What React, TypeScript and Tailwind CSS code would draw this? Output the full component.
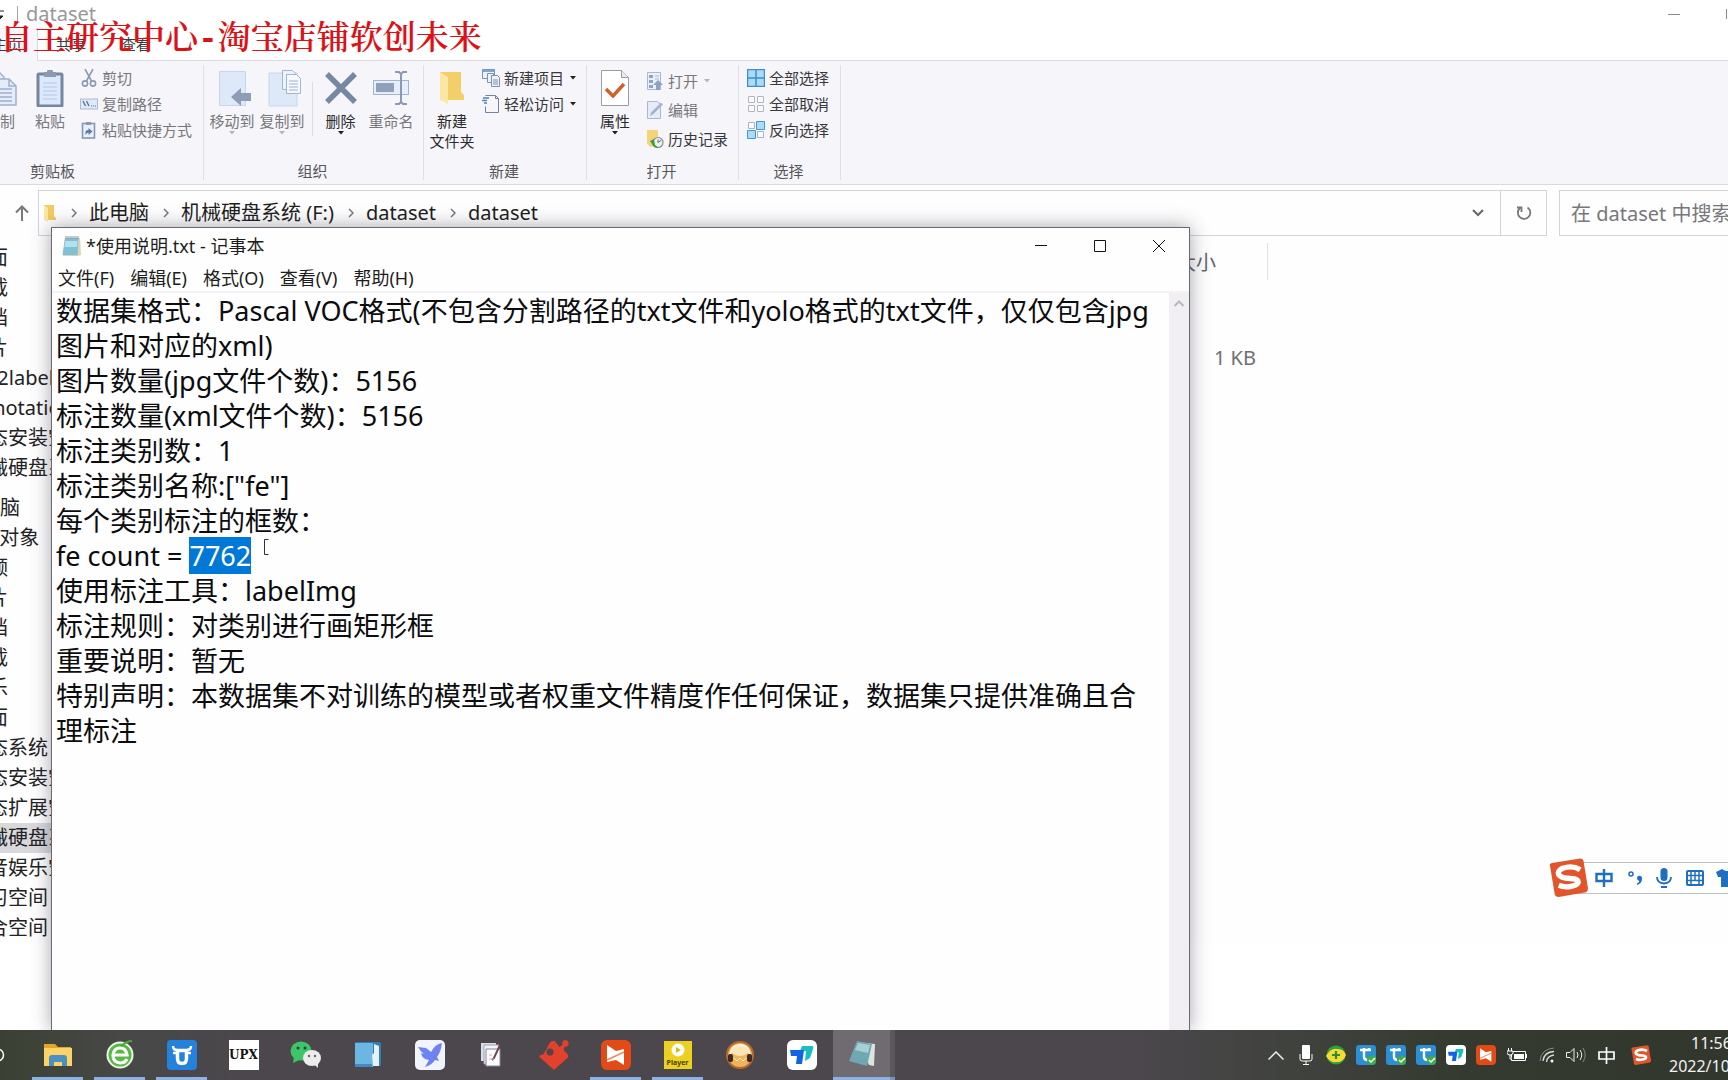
import { useEffect, useRef } from 'react';
import type { ReactNode } from 'react';

const noteText = [
  '数据集格式：Pascal VOC格式(不包含分割路径的txt文件和yolo格式的txt文件，仅仅包含jpg图片和对应的xml)',
  '图片数量(jpg文件个数)：5156',
  '标注数量(xml文件个数)：5156',
  '标注类别数：1',
  '标注类别名称:["fe"]',
  '每个类别标注的框数：',
  'fe count = 7762',
  '使用标注工具：labelImg',
  '标注规则：对类别进行画矩形框',
  '重要说明：暂无',
  '特别声明：本数据集不对训练的模型或者权重文件精度作任何保证，数据集只提供准确且合理标注',
].join('\n');

const quickAccess = ['桌面', '下载', '文档', '图片', 'csv2label', 'Annotations', '固态安装空间', '机械硬盘系统'];
const thisPc = ['3D 对象', '视频', '图片', '文档', '下载', '音乐', '桌面', '固态系统', '固态安装空间', '固态扩展空间', '机械硬盘系统', '影音娱乐空间', '学习空间', '综合空间'];
const crumbs = ['此电脑', '机械硬盘系统 (F:)', 'dataset', 'dataset'];
const noteMenus = ['文件(F)', '编辑(E)', '格式(O)', '查看(V)', '帮助(H)'];

/* ---------- ribbon icons ---------- */

const CopyIcon = () => (
  <svg width="36" height="36" viewBox="0 0 36 36" fill="#e4ecfa" stroke="#9db0cf" strokeWidth="1.5">
    <path d="M4 1h12l6 6v20H4z" />
    <path d="M13 9h14l7 7v19H13z" />
    <path d="M27 9v7h7M17 19h13M17 23h13M17 27h13M17 31h13" fill="none" />
  </svg>
);
const PasteIcon = () => (
  <svg width="28" height="37" viewBox="0 0 28 37">
    <rect x="2" y="4" width="24" height="32" rx="1" fill="#dce8fb" stroke="#75869f" strokeWidth="3" />
    <path d="M8 2h3a3 3 0 0 1 6 0h3v5H8z" fill="#8b9ab0" />
    <path d="M7 13h14M7 17h14M7 21h14M7 25h14M7 29h14" stroke="#b6c8e4" />
  </svg>
);
const CutIcon = () => (
  <svg width="18" height="18" viewBox="0 0 18 18" fill="none" stroke="#8c9bb1" strokeWidth="1.6">
    <path d="M5 0l6.5 12M13 0L6.5 12" />
    <circle cx="5" cy="14.500" r="2.600" /><circle cx="13" cy="14.500" r="2.600" />
  </svg>
);
const PathIcon = () => (
  <svg width="18" height="18" viewBox="0 0 18 18">
    <rect x=".5" y="4" width="17" height="10" fill="#dfe9f8" stroke="#a9bbd6" />
    <path d="M3 6l2.500 5M6.500 6l2.500 5" stroke="#5f7391" strokeWidth="1.400" />
    <path d="M11 11h1M13 11h1M15 11h1" stroke="#5f7391" strokeWidth="1.200" />
  </svg>
);
const ShortcutIcon = () => (
  <svg width="18" height="18" viewBox="0 0 18 18">
    <rect x="2.500" y="2.500" width="12" height="14.500" fill="#e8f0fc" stroke="#8798b1" strokeWidth="1.600" />
    <path d="M6 1h5v3H6z" fill="#8798b1" />
    <path d="M5.500 14V11q0-2 3-2V7l4 3.500-4 3.500v-2.500q-1.500 0-3 2.500z" fill="#5e7ba6" />
  </svg>
);
const MoveToIcon = () => (
  <svg width="38" height="37" viewBox="-4 0 38 37">
    <path d="M2.500 1.500h26v34h-26z" fill="#dde8f8" stroke="#c7d6ec" />
    <path d="M14 27l10-9v5h10v8H24v5z" fill="#8d9db5" />
  </svg>
);
const CopyToIcon = () => (
  <svg width="40" height="37" viewBox="-4 0 40 37">
    <path d="M3 3h28v33H3z" fill="#dde8f8" stroke="#c7d6ec" />
    <path d="M16.500.5h10l4 4v15h-14z" fill="#edf3fc" stroke="#a5b5cd" />
    <path d="M20.500 4.500h10l4 4v15h-14z" fill="#f5f8fe" stroke="#a5b5cd" />
    <path d="M23 11h9M23 14h9M23 17h9M23 20h9" stroke="#9fb2cf" />
  </svg>
);
const DeleteIcon = () => (
  <svg width="32" height="36" viewBox="0 0 32 36"><path d="M2 4l28 28M30 4L2 32" stroke="#7688a3" strokeWidth="5.500" /></svg>
);
const RenameIcon = () => (
  <svg width="36" height="36" viewBox="0 0 36 36" fill="none">
    <rect x=".5" y="10.500" width="35" height="14" fill="#e6eefb" stroke="#a3b5d1" />
    <rect x="3" y="13" width="18" height="9" fill="#8fa0b9" />
    <path d="M22 2h4l2 2 2-2h4M28 4v28M22 34h4l2-2 2 2h4" stroke="#8999b0" strokeWidth="2" />
  </svg>
);
const NewFolderIcon = () => (
  <svg width="26" height="36" viewBox="0 0 26 36">
    <path d="M1 2h21v20l3 3v5H1z" fill="#f2cf69" />
    <path d="M1 2l8 5v28l-3-3-5-2z" fill="#fbe6a3" />
  </svg>
);
const NewItemIcon = () => (
  <svg width="18" height="18" viewBox="0 0 18 18" fill="#eaf2fd" stroke="#7f91ac">
    <path d="M.5.5h12v9H.5z" /><path d="M1 1h11v2H1z" fill="#7aa7dc" stroke="none" />
    <path d="M5.500 4.500h6v9h-6z" /><path d="M9.500 6.500h6l2 2v9h-8z" />
    <path d="M11 11h5M11 13h5M11 15h5" />
  </svg>
);
const EasyIcon = () => (
  <svg width="18" height="18" viewBox="0 0 18 18" fill="none">
    <path d="M3.500.5h10l3 3v14h-13v-6M13.500.5v3h3" stroke="#75839a" />
    <path d="M1 3h6M0 5.500h5M2 8h3" stroke="#4f83bd" strokeWidth="1.300" />
  </svg>
);
const PropertiesIcon = () => (
  <svg width="28" height="36" viewBox="0 0 28 36">
    <path d="M.5.5h20l7 7v28H.5z" fill="#fff" stroke="#9b9ba3" /><path d="M20.500.5v7h7" fill="#e9e9ee" stroke="#9b9ba3" />
    <path d="M5 19l7 7 11-12" fill="none" stroke="#d0602c" strokeWidth="3.500" />
  </svg>
);
const OpenIcon = () => (
  <svg width="18" height="18" viewBox="0 0 18 18">
    <path d="M1.500.5h13v17h-13z" fill="#eaf0fa" stroke="#a9b9d1" />
    <path d="M3 3h4v3H3zM3 8h4v3H3zM3 13h4v3H3z" fill="#8ea5c9" /><path d="M9 4h4M9 7h4" stroke="#a9b9d1" />
    <path d="M7 13l5-5 5 5h-3v5h-4v-5z" fill="#8fa1c0" />
  </svg>
);
const EditIcon = () => (
  <svg width="18" height="18" viewBox="0 0 18 18">
    <path d="M1.500.5h10l3 3v14h-13z" fill="#e4ecf9" stroke="#a9b9d1" />
    <path d="M4 15l1-3.500L15 1.500 17 3.500 7 13.500z" fill="#a4b5d0" />
  </svg>
);
const HistoryIcon = () => (
  <svg width="18" height="18" viewBox="0 0 18 18">
    <path d="M1 0h11v14l-7 3-4-3z" fill="#f3d478" />
    <circle cx="12" cy="12.500" r="5" fill="#e9f3ea" stroke="#8a8f94" strokeWidth="1.200" />
    <path d="M12 9.500v3l3-2" stroke="#667" fill="none" />
    <path d="M4 11l4-2 1 6 4 3q-6 0-7-4z" fill="#3c9e46" />
  </svg>
);
const grid4 = 'M1.500 1.500h6v6h-6zM10.500 1.500h6v6h-6zM1.500 10.500h6v6h-6zM10.500 10.500h6v6h-6z';
const SelectAllIcon = () => (
  <svg width="18" height="18" viewBox="0 0 18 18"><path d="M.5.5h17v17H.5zM9 1v16M1 9h16" fill="#a9dbfa" stroke="#3f8fc9" strokeWidth="1.500" /></svg>
);
const SelectNoneIcon = () => (
  <svg width="18" height="18" viewBox="0 0 18 18"><path d={grid4} fill="#fafafc" stroke="#b5b7bf" /></svg>
);
const InvertIcon = () => (
  <svg width="18" height="18" viewBox="0 0 18 18">
    <path d={grid4} fill="#fafafc" stroke="#a9b5c4" />
    <path d="M9.500.5h8v8h-8zM.5 9.500h8v8h-8z" fill="#a9dbfa" stroke="#4a97cf" />
  </svg>
);
const Caret = ({ dark }: { dark?: boolean }) => (
  <svg width="6" height="4" viewBox="0 0 6 4" className="shrink-0"><path d="M0 0h6L3 3.500z" fill={dark ? '#222' : '#b5b5ba'} /></svg>
);

/* ---------- ribbon ---------- */

const BigButton = ({ icon, label, width, dark, caret }: { icon: ReactNode; label: string; width: string; dark?: boolean; caret?: boolean }) => (
  <button className={`${width} shrink-0 flex flex-col items-center pt-[9px] text-[15px] leading-5 whitespace-pre-line ${dark ? 'text-[#2b2b2e]' : 'text-[#77777c]'}`}>
    <span className="h-9 mb-[5px] flex items-start">{icon}</span>
    <span>{label}</span>
    {caret && <Caret dark={dark} />}
  </button>
);

const SmallButton = ({ icon, label, dark, caret, tall }: { icon: ReactNode; label: string; dark?: boolean; caret?: boolean; tall?: boolean }) => (
  <button className={`${tall ? 'h-[29px]' : 'h-[26px]'} flex items-center text-[15px] leading-5 whitespace-nowrap ${dark ? 'text-[#38383c]' : 'text-[#77777c]'}`}>
    <span className="mr-1">{icon}</span>
    <span className="mr-1.5">{label}</span>
    {caret && <Caret dark={dark} />}
  </button>
);

const Group = ({ label, width, children }: { label: string; width: string; children: ReactNode }) => (
  <div className={`${width} shrink-0 relative flex flex-col`}>
    <div className="flex h-[100px]">{children}</div>
    <div className="pr-[3px] text-center text-[15px] leading-5 text-[#55555a]">{label}</div>
    <div className="absolute right-0 top-1 bottom-1 w-px bg-[#dfdfe6]" />
  </div>
);

const Ribbon = () => (
  <div className="flex h-[124px] bg-[#f5f5fa] border-b border-[#d9d9df]">
    <Group label="剪贴板" width="w-[300px] -ml-24">
      <BigButton icon={<CopyIcon />} label="复制" width="w-12 ml-[72px]" />
      <BigButton icon={<PasteIcon />} label="粘贴" width="w-[52px]" />
      <div className="pt-1 pl-1">
        <SmallButton icon={<CutIcon />} label="剪切" />
        <SmallButton icon={<PathIcon />} label="复制路径" />
        <SmallButton icon={<ShortcutIcon />} label="粘贴快捷方式" />
      </div>
    </Group>
    <Group label="组织" width="w-[220px]">
      <BigButton icon={<MoveToIcon />} label="移动到" width="w-[50px] ml-[3px]" caret />
      <BigButton icon={<CopyToIcon />} label="复制到" width="w-[50px]" caret />
      <div className="w-px h-[54px] mt-[21px] ml-[5px] bg-[#dcdce4]" />
      <BigButton icon={<DeleteIcon />} label="删除" width="w-[55px]" dark caret />
      <BigButton icon={<RenameIcon />} label="重命名" width="w-[46px]" />
    </Group>
    <Group label="新建" width="w-[163px]">
      <BigButton icon={<NewFolderIcon />} label={'新建\n文件夹'} width="w-[46px] ml-[5px]" dark />
      <div className="pt-1 pl-[7px]">
        <SmallButton icon={<NewItemIcon />} label="新建项目" dark caret />
        <SmallButton icon={<EasyIcon />} label="轻松访问" dark caret />
      </div>
    </Group>
    <Group label="打开" width="w-[152px]">
      <BigButton icon={<PropertiesIcon />} label="属性" width="w-[46px] ml-[5px]" dark caret />
      <div className="pt-[5px] pl-2">
        <SmallButton icon={<OpenIcon />} label="打开" caret tall />
        <SmallButton icon={<EditIcon />} label="编辑" tall />
        <SmallButton icon={<HistoryIcon />} label="历史记录" dark tall />
      </div>
    </Group>
    <Group label="选择" width="w-[102px]">
      <div className="pt-1 pl-2">
        <SmallButton icon={<SelectAllIcon />} label="全部选择" dark />
        <SmallButton icon={<SelectNoneIcon />} label="全部取消" dark />
        <SmallButton icon={<InvertIcon />} label="反向选择" dark />
      </div>
    </Group>
  </div>
);

/* ---------- explorer ---------- */

const TitleBar = () => (
  <div className="h-[61px] flex flex-col bg-white">
    <div className="h-7 flex items-center pr-px">
      <svg width="4" height="18" viewBox="0 0 4 18"><path d="M0 6h4M0 11h3L0 14z" stroke="#222" fill="#222" /></svg>
      <div className="w-px h-4 ml-[13px] mr-2 bg-[#a5a5a8]" />
      <span className="text-xl leading-7 text-[#98989b]">dataset</span>
      <button aria-label="最小化" className="ml-auto mr-[46px]"><div className="w-3 h-px bg-[#8b8b8e]" /></button>
      <button aria-label="最大化" className="w-px h-2.5 bg-[#8b8b8e]" />
    </div>
    <div className="flex flex-1 text-[15px] leading-8 text-[#3c3c40]">
      <button className="w-[37px] flex justify-end pr-[15px] bg-[#f5f5fa] whitespace-nowrap"><span>主页</span></button>
      <div className="flex flex-1 pl-[18px] gap-[35px] border-l border-b border-[#dcdade]">
        <button className="flex">共享</button>
        <button className="flex">查看</button>
      </div>
    </div>
  </div>
);

const Chevron = () => (
  <svg width="6" height="10" viewBox="0 0 6 10" className="shrink-0"><path d="M1 1l4 4-4 4" fill="none" stroke="#77777c" strokeWidth="1.500" /></svg>
);

const AddressBar = () => (
  <div className="flex pt-[5px] text-xl leading-7">
    <div className="w-[38px] flex items-center justify-end pr-2">
      <svg width="16" height="18" viewBox="0 0 16 18"><path d="M8 17V3M2 8.500L8 2.500l6 6" fill="none" stroke="#77777c" strokeWidth="2" /></svg>
    </div>
    <div className="flex-1 flex h-[46px] border border-[#d4d4d8]">
      <div className="flex flex-1 items-center pl-1 text-[#1d1d20]">
        <svg width="13" height="18" viewBox="0 0 13 18" className="mr-[15px]"><path d="M1 1h10v11l2 2v2H1z" fill="#f2cc62" /><path d="M1 1l4 3v14l-4-2z" fill="#fbe6a3" /></svg>
        {crumbs.map((c, i) => (
          <div key={i} className="flex items-center">
            <Chevron />
            <a href="#" className="pl-3 pr-3.5">{c}</a>
          </div>
        ))}
      </div>
      <button aria-label="历史" className="px-4">
        <svg width="12" height="8" viewBox="0 0 12 8"><path d="M1 1l5 5 5-5" fill="none" stroke="#66666b" strokeWidth="2" /></svg>
      </button>
      <button aria-label="刷新" className="w-[46px] flex items-center justify-center border-l border-[#d4d4d8]">
        <svg width="16" height="16" viewBox="0 0 16 16"><path d="M11.500 2.500A6.200 6.200 0 1 1 4 3M1 2.500h4.500V7" fill="none" stroke="#77777c" strokeWidth="1.800" /></svg>
      </button>
    </div>
    <input aria-label="搜索" placeholder="在 dataset 中搜索" className="w-[169px] ml-3 h-[46px] pl-[11px] border border-r-0 border-[#d4d4d8] outline-none placeholder:text-[#77777c]" />
  </div>
);

const NavItem = ({ label, active }: { label: string; active?: boolean }) => (
  <li className={`h-[30px] ${active ? 'bg-[#d9d9dc]' : ''}`}>
    <a href="#" className="block -ml-8 whitespace-nowrap">{label}</a>
  </li>
);

const Explorer = () => (
  <div className="flex flex-col bg-[#fefefe]">
    <TitleBar />
    <Ribbon />
    <AddressBar />
    <div className="flex flex-1">
      <nav className="w-64 shrink-0 pt-[7px] text-xl leading-[30px] text-[#222225]">
        <ul>{quickAccess.map(n => <NavItem key={n} label={n} />)}</ul>
        <div className="h-[30px] mt-2.5 -ml-10">此电脑</div>
        <ul>{thisPc.map((n, i) => <NavItem key={n} label={n} active={i === 10} />)}</ul>
      </nav>
      <div className="pt-[7px]">
        <table className="table-fixed w-[1011px] text-xl leading-7">
          <thead>
            <tr className="h-[37px] text-left text-[#5c6670]">
              <th className="w-[911px]" />
              <th className="w-[100px] pt-0.5 pl-[9px] font-normal border-r border-[#e0e0e4]">大小</th>
            </tr>
          </thead>
          <tbody className="text-right text-[#6f6f73]">
            {['', '', '1 KB'].map((size, i) => (
              <tr key={i} className="h-[31px]"><td /><td className="pr-[11px]">{size}</td></tr>
            ))}
          </tbody>
        </table>
      </div>
    </div>
  </div>
);

/* ---------- notepad ---------- */

const NotepadIcon = () => (
  <svg width="20" height="20" viewBox="0 0 20 20">
    <path d="M3 2h15l1 17-3 1H1z" fill="#d9d3b8" />
    <path d="M3 2h13.500l-1 17H.5z" fill="#7fc0d6" /><path d="M3.500 5h12l-.5 6H2.500z" fill="#b5e0ee" />
    <path d="M4 0v3M6 0v3M8 0v3M10 0v3M12 0v3M14 0v3M16 0v3" stroke="#8b949b" />
  </svg>
);

const Notepad = () => {
  const ref = useRef<HTMLTextAreaElement>(null);

  useEffect(() => {
    const start = noteText.indexOf('7762');
    ref.current?.focus();
    ref.current?.setSelectionRange(start, start + 4);
  }, []);

  return (
    <section className="absolute left-[51px] top-[227px] bottom-0 w-[1139px] flex flex-col bg-[#fefefe] border border-b-0 border-[#6c6870] shadow-[0_0_18px_rgba(60,50,70,0.45)]">
      <div className="h-9 flex items-center pl-2.5 text-lg leading-7 text-[#1d1d20]">
        <NotepadIcon />
        <span className="pl-1">*使用说明.txt - 记事本</span>
        <div className="ml-auto flex pr-6 gap-[47px]">
          <button aria-label="最小化"><svg width="12" height="12" viewBox="0 0 12 12"><path d="M0 5.500h12" stroke="#111" /></svg></button>
          <button aria-label="最大化"><svg width="12" height="12" viewBox="0 0 12 12"><path d="M.5.5h11v11H.5z" fill="none" stroke="#111" /></svg></button>
          <button aria-label="关闭"><svg width="12" height="12" viewBox="0 0 12 12"><path d="M0 0l12 12M12 0L0 12" stroke="#111" /></svg></button>
        </div>
      </div>
      <div className="h-[29px] flex items-center pl-1.5 gap-4 text-lg leading-7 text-[#1d1d20] border-b-2 border-[#f3f2f5]">
        {noteMenus.map(m => <button key={m}>{m}</button>)}
      </div>
      <div className="flex flex-1 relative">
        <textarea
          ref={ref}
          aria-label="记事本内容"
          spellCheck={false}
          defaultValue={noteText}
          className="w-[1117px] pl-1 pr-[9px] resize-none overflow-hidden outline-none text-[27px] leading-[35px] text-[#0c0c0f] selection:bg-[#0078d7] selection:text-white"
        />
        <svg width="5" height="16" viewBox="0 0 5 16" className="absolute left-[212px] top-[246px]"><path d="M4.500.5h-4v15h4" fill="none" stroke="#333" /></svg>
        <div className="flex-1 bg-[#f1eff4] flex justify-center pt-[7px]">
          <svg width="10" height="7" viewBox="0 0 10 7"><path d="M.5 6L5 1.500 9.500 6" fill="none" stroke="#b9b7bd" strokeWidth="2" /></svg>
        </div>
      </div>
    </section>
  );
};

/* ---------- input method bar ---------- */

const SogouLogo = ({ size }: { size: number }) => (
  <svg width={size} height={size} viewBox="0 0 40 40" className="relative z-10 shrink-0">
    <path d="M1 8Q0 6 3 5L32 .5q3 0 3.500 3L40 31q0 3-2 4L10 40q-3 0-4-2z" fill="#e2552b" />
    <path d="M32 12Q24 7 14 10.500q-6 3-4 6.500t12 4q8 .5 8 3.500t-7 4.500-13-1" fill="none" stroke="#fff" strokeWidth="5.500" />
  </svg>
);

const ImeBar = () => (
  <div className="absolute right-0 top-[858px] flex items-center">
    <SogouLogo size={39} />
    <div className="w-[160px] h-8 -ml-5 pl-[26px] flex items-center overflow-hidden bg-white border border-r-0 border-[#bcc0cb]">
      <svg width="18" height="18" viewBox="0 0 18 18" className="shrink-0" fill="none" stroke="#1f6fc0" strokeWidth="2.400"><path d="M1.500 5h15v7h-15zM9 0v18" /></svg>
      <svg width="14" height="14" viewBox="0 0 14 14" className="shrink-0 ml-[15px]"><circle cx="3" cy="3" r="2" fill="none" stroke="#1f6fc0" strokeWidth="1.500" /><path d="M9 7a2.300 2.300 0 1 1 5 .5q0 5-5 6.500v-1.500q2-.8 2.300-2.500Q9 9.500 9 7z" fill="#1f6fc0" /></svg>
      <svg width="16" height="20" viewBox="0 0 16 20" className="shrink-0 ml-[14px]"><rect x="4.500" y="0" width="7" height="13" rx="3.500" fill="#1f6fc0" /><path d="M1 9q0 6 7 6.500 7-.5 7-6.500M5 19h6" fill="none" stroke="#1f6fc0" strokeWidth="1.800" /></svg>
      <svg width="18" height="16" viewBox="0 0 18 16" className="shrink-0 ml-[14px]" fill="none" stroke="#1f6fc0"><rect x="1" y="1" width="16" height="14" rx="1" strokeWidth="2" /><path d="M1 5.500h16M1 10.500h16M5 2v3M9 2v8M13 2v8M5 6v9M13 11v4" strokeWidth="1.500" /></svg>
      <svg width="22" height="18" viewBox="0 0 22 18" className="shrink-0 ml-3"><path d="M0 3l6-3q5 4 10 0l6 3-2 5h-3v10H5V8H2z" fill="#1f6fc0" /></svg>
    </div>
  </div>
);

/* ---------- taskbar ---------- */

const XMark = ({ size }: { size: number }) => (
  <svg width={size} height={size} viewBox="0 0 30 30">
    <rect width="30" height="30" rx="6" fill="#e34a16" />
    <path d="M6 5l9 6 8-2v16l-8-5-9 2z" fill="#fff" /><path d="M6 20l17-8" stroke="#e98a6a" strokeWidth="1.500" />
  </svg>
);
const ToMark = ({ size }: { size: number }) => (
  <svg width={size} height={size} viewBox="0 0 30 30">
    <rect width="30" height="30" rx="6" fill="#fff" />
    <path d="M15 6h10q2 0 1 3l-3 9-5 3 1-10h-6z" fill="#17bfc4" />
    <path d="M3 10h14l-2 14H9l1-8H4z" fill="#1262e6" />
  </svg>
);
const UMark = () => (
  <svg width="30" height="30" viewBox="0 0 30 30">
    <rect width="30" height="30" rx="4" fill="#2482dc" />
    <path d="M6 6q0 4 4 4M24 6q0 4-4 4M6 13h3M21 13h3" stroke="#fff" strokeWidth="2.500" fill="none" />
    <path d="M10.500 10.500h9v8q0 5-4.500 5t-4.500-5z" stroke="#fff" strokeWidth="3.500" fill="none" />
  </svg>
);

const apps: { name: string; open?: boolean; icon: ReactNode }[] = [
  { name: '文件资源管理器', open: true, icon: (
    <svg width="28" height="26" viewBox="0 0 28 26"><path d="M0 2h11l3 3h13v17H0z" fill="#e0a82a" /><path d="M0 6h28v18H0z" fill="#fbd367" /><path d="M5 24v-8q0-3 3-3h12q3 0 3 3v8h-5v-4h-8v4z" fill="#4a90c4" /></svg>
  ) },
  { name: '浏览器', open: true, icon: (
    <svg width="30" height="30" viewBox="0 0 30 30"><circle cx="15" cy="15" r="12.500" fill="#58b843" stroke="#e9f7e4" strokeWidth="2" /><path d="M22 19q-2 4-7 4-7-1-7-8 1-7 7-7 6 0 7 7H9" stroke="#fff" strokeWidth="3.200" fill="none" /><path d="M16 6Q22 1 27 1" stroke="#4ea83a" strokeWidth="2" fill="none" /></svg>
  ) },
  { name: 'U盘', open: true, icon: <UMark /> },
  { name: 'UPX', icon: <span className="w-[30px] h-[30px] bg-white text-[#141414] text-xs leading-[30px] font-bold font-['DejaVu_Serif',serif] text-center">UPX</span> },
  { name: '微信', icon: (
    <svg width="32" height="28" viewBox="0 0 32 28"><ellipse cx="11" cy="10" rx="10.500" ry="9.500" fill="#3fc565" /><path d="M4 16l-1 6 6-3z" fill="#3fc565" /><circle cx="8" cy="7" r="1.500" fill="#245" /><circle cx="15" cy="7" r="1.500" fill="#245" /><ellipse cx="22" cy="17" rx="9" ry="8" fill="#ececec" /><path d="M24 23l4 4v-5z" fill="#ececec" /><circle cx="19" cy="15" r="1.200" fill="#666" /><circle cx="25" cy="15" r="1.200" fill="#666" /></svg>
  ) },
  { name: '文件夹', icon: (
    <svg width="28" height="26" viewBox="0 0 28 26"><path d="M1 1q0-1 2-1h22q2 0 2 2v22H1z" fill="#2f7fb5" /><path d="M1 1h18v24H1z" fill="#6cb6e4" /><path d="M20 2l5 2v20h-6l-1-11 2-2z" fill="#e6f1f8" /><path d="M1 22h17v3H1z" fill="#3d8dc4" /></svg>
  ) },
  { name: '迅雷', icon: (
    <svg width="30" height="30" viewBox="0 0 30 30"><rect width="30" height="30" rx="5" fill="#f2f4fd" /><path d="M3 7l8 1q3 2 5 4 4-8 11-9-1 9-5 14l2 4-4-1q-3 5-10 7l4-7q-7-1-8-7l3 1Q5 11 3 7z" fill="#6f83f0" /></svg>
  ) },
  { name: '文档', icon: (
    <svg width="24" height="28" viewBox="0 0 24 28"><path d="M1 2h15v18H1z" fill="#dcdde6" /><path d="M4 4h15v19H4z" fill="#f4f4f8" stroke="#9fa0b0" /><path d="M6 8h14v17H6z" fill="#fbfbfd" stroke="#85869a" /><path d="M20 4l-6 13-2 2" stroke="#6b4a48" strokeWidth="2" fill="none" /><path d="M9 14h3M9 18h5" stroke="#b9bac8" /></svg>
  ) },
  { name: '拼图', icon: (
    <svg width="30" height="30" viewBox="0 0 30 30"><path d="M15 30L.5 17q-.5-2 2-2l2-1 3-5 3-6q4-4 6-1l4 5 3-2q-1-4 2-5 5 0 4 5-1 2-4 2l-1 3 4 4 1 3z" fill="#e3412b" /><circle cx="11" cy="12" r="3.500" fill="#4b474c" /></svg>
  ) },
  { name: '录屏', open: true, icon: <XMark size={30} /> },
  { name: '播放器', open: true, icon: (
    <span className="w-7 h-7 bg-[#ecd022] flex flex-col items-center">
      <svg width="14" height="16" viewBox="0 0 14 16"><circle cx="7" cy="9" r="6.500" fill="#fff" /><path d="M5 6l5 3-5 3z" fill="#d7bd12" /></svg>
      <span className="text-[7px] leading-3 font-bold text-[#4a3d05]">Player</span>
    </span>
  ) },
  { name: '音频', icon: (
    <svg width="28" height="28" viewBox="0 0 28 28"><circle cx="14" cy="14" r="13" fill="#f0b45e" stroke="#b96a28" strokeWidth="2" /><ellipse cx="14" cy="9" rx="9" ry="6" fill="#fbe3b4" /><path d="M4 14Q6 4 14 4t10 10" fill="none" stroke="#fff3d8" strokeWidth="2" /><rect x="2" y="13" width="5" height="8" rx="2" fill="#3a2a26" /><rect x="21" y="13" width="5" height="8" rx="2" fill="#3a2a26" /><path d="M8 17l3 3 3-3 3 3 3-3" stroke="#fff0c8" fill="none" /></svg>
  ) },
  { name: 'ToDesk', icon: <ToMark size={30} /> },
];

const TrayShield = () => (
  <svg width="20" height="20" viewBox="0 0 20 20">
    <rect width="20" height="20" rx="3" fill="#2b8fd6" />
    <path d="M4 5h11M8 3v9q0 3 4 3M13 3v3" stroke="#fff" strokeWidth="2.400" fill="none" />
    <path d="M11 12q4 0 5-2 1 2 4 2v4q-1 3-4 4-4-1-5-4z" fill="#3faf3d" /><path d="M13 15l2 2 4-4" stroke="#fff" strokeWidth="1.500" fill="none" />
  </svg>
);

const trayIcons: { name: string; width: string; icon: ReactNode }[] = [
  { name: '显示隐藏的图标', width: 'w-[30px]', icon: <svg width="16" height="9" viewBox="0 0 16 9"><path d="M.5 8.500L8 1l7.500 7.500" fill="none" stroke="#eee" strokeWidth="1.500" /></svg> },
  { name: '麦克风', width: 'w-[30px]', icon: <svg width="14" height="20" viewBox="0 0 14 20"><rect x="3" y="0" width="8" height="14" rx="1" fill="#fff" /><path d="M1 9v5q0 2 2 2h8q2 0 2-2V9M7 16v3M4 19.500h6" stroke="#fff" fill="none" /></svg> },
  { name: '360', width: 'w-[30px]', icon: <svg width="20" height="20" viewBox="0 0 20 20"><circle cx="10" cy="10" r="9.500" fill="#2f9f47" /><path d="M0 11Q5 2 12 4q6 0 8 6-3 8-10 7-6 1-10-6z" fill="#f6dc2e" /><path d="M10 6v8M6 10h8" stroke="#2c8b3e" strokeWidth="2.200" /></svg> },
  { name: '防护 1', width: 'w-[30px]', icon: <TrayShield /> },
  { name: '防护 2', width: 'w-[30px]', icon: <TrayShield /> },
  { name: '防护 3', width: 'w-[30px]', icon: <TrayShield /> },
  { name: 'ToDesk 托盘', width: 'w-[30px]', icon: <ToMark size={20} /> },
  { name: '录屏托盘', width: 'w-[30px]', icon: <XMark size={20} /> },
  { name: '电源', width: 'w-[31px]', icon: <svg width="20" height="14" viewBox="0 0 20 14"><path d="M4.500 3.500h14v9h-14z" fill="none" stroke="#fff" /><path d="M7 6h10v5H7zM18 6h2v4h-2z" fill="#fff" /><path d="M0 3h6v2q0 2-3 2t-3-2zM1.500 0v3M4.500 0v3M3 7v4h2" stroke="#fff" fill="#3b3f3a" /></svg> },
  { name: '网络', width: 'w-[30px]', icon: <svg width="16" height="16" viewBox="0 0 16 16" fill="none" stroke="#ddd"><path d="M1 14Q2 2 15 1" stroke="#888" /><path d="M4 14Q5 5 15 4.500M7.500 15Q8 9 15 8" strokeWidth="1.300" /><circle cx="13" cy="14" r="1.500" fill="#fff" stroke="none" /></svg> },
  { name: '音量', width: 'w-[28px]', icon: <svg width="20" height="16" viewBox="0 0 20 16" fill="none" stroke="#eee"><path d="M.5 5.500H4l4-4v13l-4-4H.5z" /><path d="M11 5q2 3 0 6M14 3q3.500 5 0 10" /><path d="M17 1q4.500 7 0 14" stroke="#888" /></svg> },
  { name: '中文输入', width: 'w-[33px]', icon: <svg width="17" height="17" viewBox="0 0 17 17" fill="none" stroke="#fff" strokeWidth="1.700"><path d="M1 5h15v7H1zM8.500 0v17" /></svg> },
  { name: '搜狗输入法', width: 'w-[36px]', icon: <SogouLogo size={20} /> },
];

const Taskbar = () => (
  <footer className="relative h-[50px] flex overflow-hidden bg-[linear-gradient(90deg,#3a4133_0%,#484847_7%,#4b474c_14%,#4b474c_66%,#434442_72%,#343a2f_85%,#31372c_100%)]">
    <button aria-label="搜索" className="w-[27px] flex items-center">
      <svg width="5" height="14" viewBox="0 0 5 14"><circle cx="-2.500" cy="7" r="6" fill="none" stroke="#fff" strokeWidth="1.500" /></svg>
    </button>
    <div className="flex gap-px">
      {apps.map(a => (
        <button key={a.name} aria-label={a.name} className={`w-[61px] flex items-center justify-center ${a.open ? 'bg-[linear-gradient(#8ab2e2,#8ab2e2)] bg-[length:51px_3px] bg-bottom bg-no-repeat' : ''}`}>
          {a.icon}
        </button>
      ))}
      <button aria-label="记事本" className="w-[57px] flex items-center justify-center bg-[#706b70] border-b-[3px] border-[#8ab2e2]">
        <svg width="28" height="28" viewBox="0 0 28 28"><path d="M10 2l17 2-1 22-5-1z" fill="#dfe3e0" /><path d="M9 1l15 3-5 22L1 21z" fill="#6fa7b2" /><path d="M10 3l12 2-2 8-13-3z" fill="#a9cfd6" /></svg>
      </button>
      <div className="w-[5px] -ml-px bg-[#5b575c] border-b-[3px] border-[#7095c0]" />
    </div>
    <div className="ml-auto flex items-center">
      {trayIcons.map(t => (
        <button key={t.name} aria-label={t.name} className={`${t.width} flex items-center justify-center`}>{t.icon}</button>
      ))}
      <div className="w-[69px] pl-2.5 overflow-hidden text-base leading-[23px] text-[#f2f2f2] whitespace-nowrap">
        <div className="pl-[22px]">11:56</div>
        <div>2022/10</div>
      </div>
    </div>
  </footer>
);

export default function App() {
  return (
    <div className="min-h-screen flex flex-col overflow-hidden bg-white font-['Noto_Sans','Noto_Sans_CJK_SC',sans-serif]">
      <main className="relative isolate flex-1 overflow-hidden">
        <Explorer />
        <Notepad />
        <ImeBar />
        <div className="absolute left-0 top-5 text-[33px] leading-[42px] font-semibold whitespace-nowrap text-[#dc1218] font-['Liberation_Mono','Noto_Serif_CJK_SC','Noto_Sans_CJK_SC',serif]">
          自主研究中心-淘宝店铺软创未来
        </div>
      </main>
      <Taskbar />
    </div>
  );
}
